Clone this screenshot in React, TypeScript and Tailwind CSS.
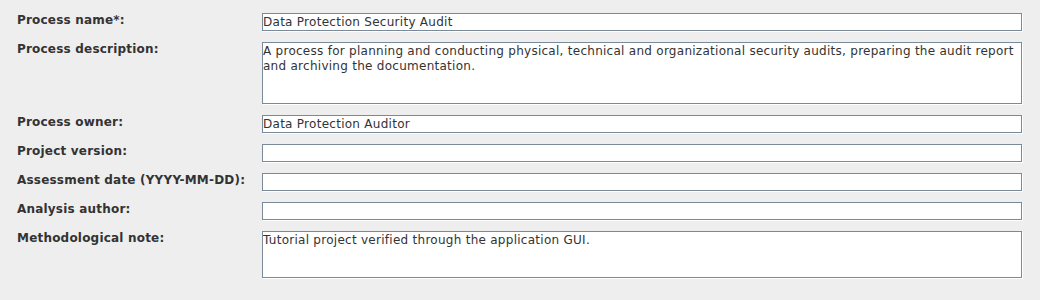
import React from "react";

function Field({ h, children }: { h: number; children?: React.ReactNode }) {
  return (
    <div className={h === 19 ? "h-[19px]" : h === 63 ? "h-[63px]" : "h-[48px]"}>
      <div
        className={
          (h === 19 ? "h-[18px] leading-[16px] " : h === 63 ? "h-[62px] leading-[15px] pt-[1px] " : "h-[47px] leading-[15px] pt-[1px] ") +
          "w-[760px] border border-[#7a8a99] bg-white shadow-[1px_1px_0_0_#ffffff] text-[#333333] tracking-[0.27px] whitespace-nowrap overflow-hidden"
        }
      >
        {children}
      </div>
    </div>
  );
}

function Label({ children }: { children: React.ReactNode }) {
  return <div className="font-bold leading-[14px] text-[#333333] tracking-[0.2px] whitespace-nowrap">{children}</div>;
}

export default function App() {
  return (
    <div className="w-[1040px] h-[300px] bg-[#eeeeee] pt-[13px] pl-[17px] font-['DejaVu_Sans',sans-serif] text-[12px] overflow-hidden">
      <div className="grid grid-cols-[245px_761px] gap-y-[10px]">
        <Label>Process name*:</Label>
        <Field h={19}>Data Protection Security Audit</Field>

        <Label>Process description:</Label>
        <Field h={63}>
          A process for planning and conducting physical, technical and organizational security audits, preparing the audit report
          <br />
          and archiving the documentation.
        </Field>

        <Label>Process owner:</Label>
        <Field h={19}>Data Protection Auditor</Field>

        <Label>Project version:</Label>
        <Field h={19} />

        <Label>Assessment date (YYYY-MM-DD):</Label>
        <Field h={19} />

        <Label>Analysis author:</Label>
        <Field h={19} />

        <Label>Methodological note:</Label>
        <Field h={48}>Tutorial project verified through the application GUI.</Field>
      </div>
    </div>
  );
}
